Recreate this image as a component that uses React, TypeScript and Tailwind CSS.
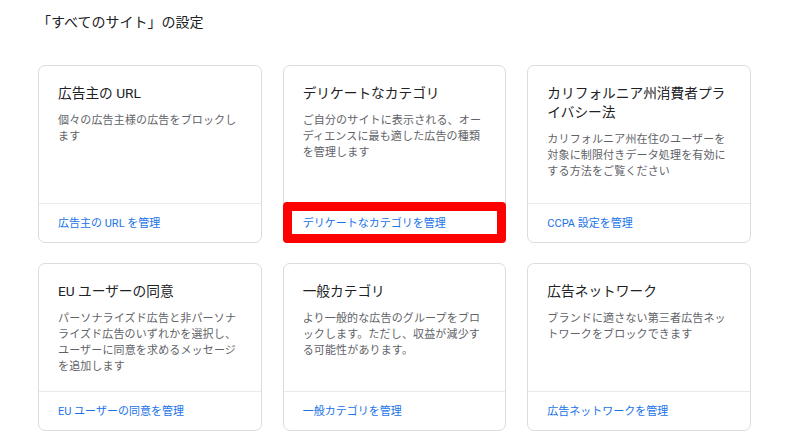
const cards = [
  {
    title: "広告主の URL",
    desc: "個々の広告主様の広告をブロックします",
    link: "広告主の URL を管理",
  },
  {
    title: "デリケートなカテゴリ",
    desc: "ご自分のサイトに表示される、オーディエンスに最も適した広告の種類を管理します",
    link: "デリケートなカテゴリを管理",
    highlight: true,
  },
  {
    title: "カリフォルニア州消費者プライバシー法",
    desc: "カリフォルニア州在住のユーザーを対象に制限付きデータ処理を有効にする方法をご覧ください",
    link: "CCPA 設定を管理",
  },
  {
    title: "EU ユーザーの同意",
    desc: "パーソナライズド広告と非パーソナライズド広告のいずれかを選択し、ユーザーに同意を求めるメッセージを追加します",
    link: "EU ユーザーの同意を管理",
  },
  {
    title: "一般カテゴリ",
    desc: "より一般的な広告のグループをブロックします。ただし、収益が減少する可能性があります。",
    link: "一般カテゴリを管理",
  },
  {
    title: "広告ネットワーク",
    desc: "ブランドに適さない第三者広告ネットワークをブロックできます",
    link: "広告ネットワークを管理",
  },
];

export default function App() {
  return (
    <div
      className="w-[790px] h-[445px] bg-white overflow-hidden"
      style={{ fontFamily: 'Roboto, "Noto Sans CJK JP", sans-serif' }}
    >
      <div className="pl-[37px] pt-[12px] pr-[39px]">
        {/* Page title */}
        <h1 className="text-[14px] leading-[20px] text-[#202124]">「すべてのサイト」の設定</h1>

        {/* Setting cards */}
        <div className="mt-[33px] grid grid-cols-3 grid-rows-[178px_168px] gap-x-[21px] gap-y-[20px] ml-[1px]">
          {cards.map((card) => (
            <div
              key={card.title}
              className="flex flex-col bg-white border border-[#dadce0] rounded-[7px]"
            >
              <div className="flex-1 px-[19px] pt-[18px]">
                <h2 className="text-[13.7px] leading-[19px] text-[#202124]">{card.title}</h2>
                <p className="mt-[10px] text-[11px] leading-[16px] tracking-[0.15px] text-[#5f6368]">
                  {card.desc}
                </p>
              </div>
              <div className="relative h-[39px] border-t border-[#e8eaed] px-[19px] pt-[3px] flex items-center">
                <span className="text-[11px] text-[#1a73e8]">{card.link}</span>
                {card.highlight && (
                  <div className="absolute -left-[1px] -right-[1px] -top-[2px] -bottom-[1px] border-[9px] border-[#ff0000] rounded-[4px]" />
                )}
              </div>
            </div>
          ))}
        </div>
      </div>
    </div>
  );
}
